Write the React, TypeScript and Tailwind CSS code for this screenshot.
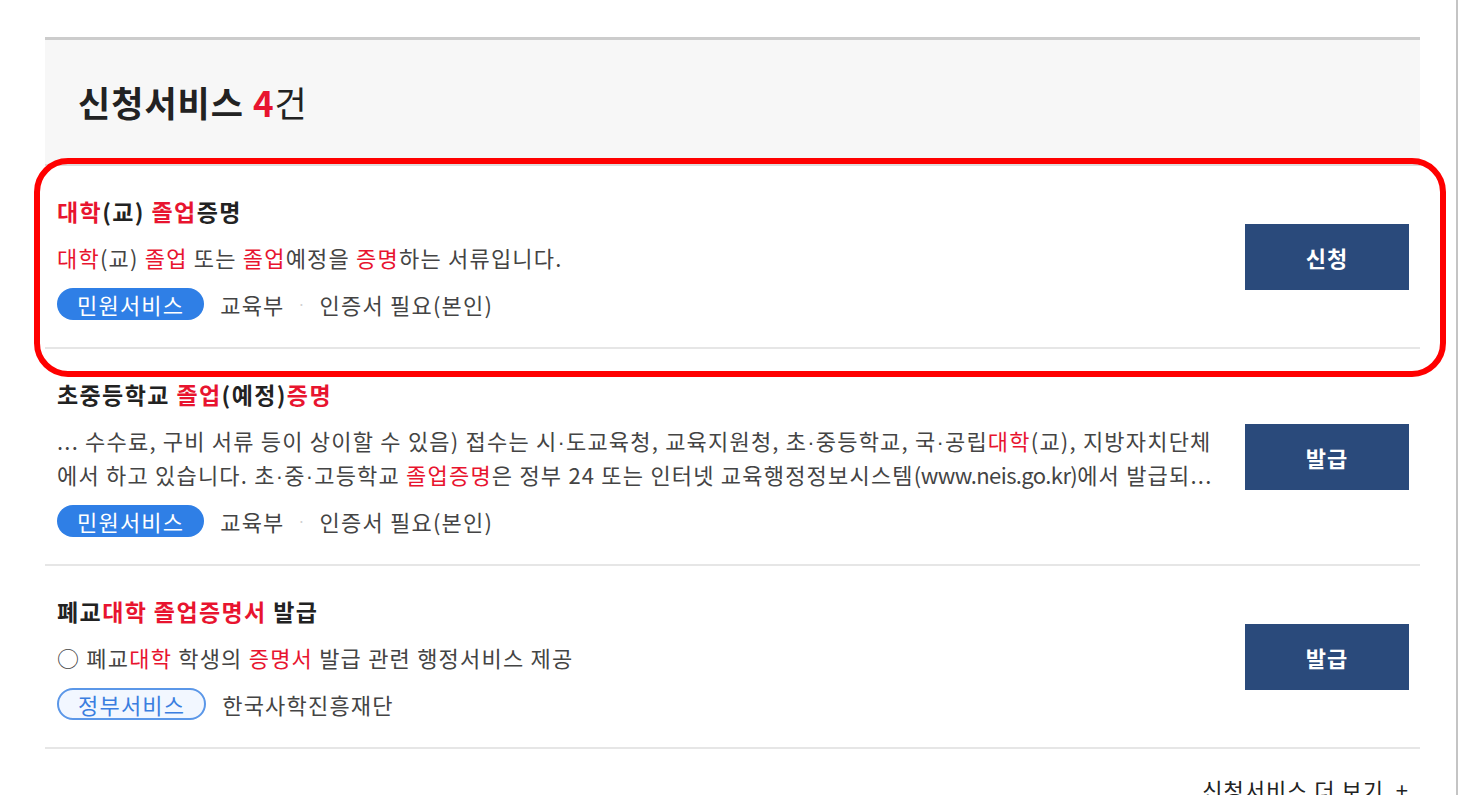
import React from 'react';

type Seg = { t: string; hl?: boolean; latin?: boolean };

type Service = {
  id: number;
  title: Seg[];
  lines: Seg[][];
  badge: { label: string; kind: 'solid' | 'outline' };
  meta: string[];
  action: string;
};

const services: Service[] = [
  {
    id: 1,
    title: [{ t: '대학', hl: true }, { t: '(교) ' }, { t: '졸업', hl: true }, { t: '증명' }],
    lines: [
      [
        { t: '대학', hl: true },
        { t: '(교) ' },
        { t: '졸업', hl: true },
        { t: ' 또는 ' },
        { t: '졸업', hl: true },
        { t: '예정을 ' },
        { t: '증명', hl: true },
        { t: '하는 서류입니다.' },
      ],
    ],
    badge: { label: '민원서비스', kind: 'solid' },
    meta: ['교육부', '인증서 필요(본인)'],
    action: '신청',
  },
  {
    id: 2,
    title: [{ t: '초중등학교 ' }, { t: '졸업', hl: true }, { t: '(예정)' }, { t: '증명', hl: true }],
    lines: [
      [
        { t: '... 수수료, 구비 서류 등이 상이할 수 있음) 접수는 시·도교육청, 교육지원청, 초·중등학교, 국·공립' },
        { t: '대학', hl: true },
        { t: '(교), 지방자치단체' },
      ],
      [
        { t: '에서 하고 있습니다. 초·중·고등학교 ' },
        { t: '졸업증명', hl: true },
        { t: '은 정부 24 또는 인터넷 교육행정정보시스템' },
        { t: '(www.neis.go.kr)', latin: true },
        { t: '에서 발급되...' },
      ],
    ],
    badge: { label: '민원서비스', kind: 'solid' },
    meta: ['교육부', '인증서 필요(본인)'],
    action: '발급',
  },
  {
    id: 3,
    title: [{ t: '폐교' }, { t: '대학 졸업증명서', hl: true }, { t: ' 발급' }],
    lines: [
      [
        { t: '○ 폐교' },
        { t: '대학', hl: true },
        { t: ' 학생의 ' },
        { t: '증명서', hl: true },
        { t: ' 발급 관련 행정서비스 제공' },
      ],
    ],
    badge: { label: '정부서비스', kind: 'outline' },
    meta: ['한국사학진흥재단'],
    action: '발급',
  },
];

// the CJK font draws "·" full width, so it gets a latin face
const withDots = (str: string) =>
  str.split('·').map((part, i) => (
    <React.Fragment key={i}>
      {i > 0 && <span className="font-['Liberation_Sans'] leading-none">·</span>}
      {part}
    </React.Fragment>
  ));

const Text: React.FC<{ segs: Seg[] }> = ({ segs }) => (
  <>
    {segs.map((s, i) => (
      <span
        key={i}
        className={(s.hl ? 'text-[#e8142f]' : '') + (s.latin ? ' tracking-[-0.6px]' : '')}
      >
        {withDots(s.t)}
      </span>
    ))}
  </>
);

const ServiceRow: React.FC<{ item: Service }> = ({ item }) => (
  <li className="flex items-center border-b-2 border-[#e6e6e6] pl-[12px] pr-[11px] pt-[28px] pb-[27px]">
    <div className="flex-1 min-w-0">
      <p className="h-[34px] text-[23px] leading-[34px] font-semibold tracking-[1.4px] text-[#222]">
        <Text segs={item.title} />
      </p>
      <div className="mt-[12px] text-[22px] leading-[34px] tracking-[1.2px] text-[#444]">
        {item.lines.map((line, i) => (
          <p key={i} className="h-[34px] whitespace-nowrap">
            <Text segs={line} />
          </p>
        ))}
      </div>
      <div className="mt-[14px] flex items-center h-[32px] text-[22px] tracking-[1.2px] text-[#444]">
        {item.badge.kind === 'solid' ? (
          <span className="h-[32px] px-[20px] rounded-full bg-[#2f7fe6] text-white flex items-center leading-none">
            {item.badge.label}
          </span>
        ) : (
          <span className="h-[32px] px-[19px] rounded-full border-2 border-[#5b97e8] bg-[#f2f7ff] text-[#3a7ee0] flex items-center leading-none">
            {item.badge.label}
          </span>
        )}
        {item.meta.map((m, i) => (
          <React.Fragment key={i}>
            {i > 0 && <span className="mx-[13px] text-[#d0d0d0] text-[14px]">·</span>}
            <span className={i === 0 ? 'ml-[16px]' : ''}>{m}</span>
          </React.Fragment>
        ))}
      </div>
    </div>
    <button className="w-[164px] h-[66px] bg-[#2a4a7b] text-white text-[22px] font-bold tracking-[1px] shrink-0">
      {item.action}
    </button>
  </li>
);

export default function App() {
  return (
    <div
      className="h-[795px] w-[1464px] overflow-hidden bg-white"
      style={{ fontFamily: '"Noto Sans CJK KR", "Noto Sans", sans-serif' }}
    >
      <div className="h-full w-[1458px] border-r-2 border-[#c4c4c4] pt-[37px]">
        <section className="relative ml-[45px] w-[1375px]">
          <div className="h-[129px] border-t-[3px] border-[#cccccc] border-b-2 border-b-[#dddddd] bg-[#f7f7f7] pl-[33px] flex items-center">
            <h2 className="text-[35px] font-bold text-[#222] tracking-[1px]">
              신청서비스 <span className="text-[#e8142f]">4</span>
              <span className="font-normal">건</span>
            </h2>
          </div>

          <ul>
            {services.map((s) => (
              <ServiceRow key={s.id} item={s} />
            ))}
          </ul>

          <div className="flex justify-end pr-[11px] pt-[24px]">
            <span className="text-[22px] tracking-[1px] text-[#222]">신청서비스 더 보기 &nbsp;+</span>
          </div>

          {/* highlight box drawn over the first result */}
          <div className="absolute left-[-11px] top-[121px] w-[1412px] h-[219px] rounded-[34px] border-[6px] border-[#ff0000] pointer-events-none" />
        </section>
      </div>
    </div>
  );
}
